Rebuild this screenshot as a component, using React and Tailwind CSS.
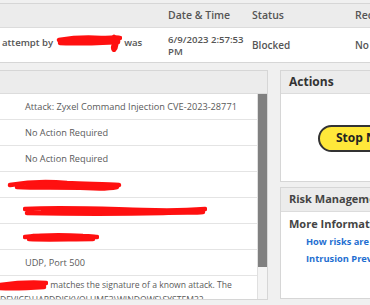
import React from 'react';

const font = { fontFamily: '"Open Sans", "Noto Sans", sans-serif' };

function Scribble({ w, h, paths, className = '' }) {
  return (
    <svg width={w} height={h} viewBox={`0 0 ${w} ${h}`} className={`inline-block align-middle ${className}`}>
      {paths.map((d, i) => (
        <path key={i} d={d} fill="none" stroke="#ff1010" strokeWidth="4.5" strokeLinecap="round" strokeLinejoin="round" />
      ))}
    </svg>
  );
}

const rows = [
  { text: 'Attack: Zyxel Command Injection CVE-2023-28771' },
  { text: 'No Action Required' },
  { text: 'No Action Required' },
  {
    scribble: (
      <Scribble
        w={116}
        h={18}
        className="-ml-[18px]"
        paths={['M3 9 C20 6 40 5 60 7 C80 8 100 8 112 9', 'M10 11 C30 12 55 11 80 12 C95 13 105 12 110 11', 'M20 8 C40 7 70 9 100 10']}
      />
    ),
  },
  {
    scribble: (
      <Scribble
        w={184}
        h={14}
        className="-ml-[2px]"
        paths={['M2 5 C40 3 80 5 120 6 C150 7 170 6 182 5', 'M4 9 C50 10 100 10 140 9 C160 8 172 9 180 8', 'M20 7 C70 6 120 8 170 7']}
      />
    ),
  },
  {
    scribble: (
      <Scribble
        w={76}
        h={12}
        className="-ml-[2px]"
        paths={['M2 6 C20 4 40 4 60 5 C68 5 72 6 74 6', 'M6 8 C25 9 45 8 70 8', 'M10 5 C30 6 50 6 68 7']}
      />
    ),
  },
  { text: 'UDP, Port 500' },
];

export default function App() {
  return (
    <div className="w-[370px] h-[305px] overflow-hidden bg-[#f0f0f0] text-[#555]" style={font}>
      {/* top result table */}
      <div className="mt-[3px] border-t border-[#d6d6d6]">
        <div className="flex h-[24px] items-center bg-[#ececec] border-b border-[#dcdcdc] text-[10.5px] font-semibold text-[#555] whitespace-nowrap">
          <div className="w-[168px] shrink-0" />
          <div className="w-[84px] shrink-0">Date &amp; Time</div>
          <div className="w-[103px] shrink-0">Status</div>
          <div className="shrink-0">Recommended</div>
        </div>
        <div className="flex h-[35px] bg-white border-b border-[#d6d6d6] text-[9.6px] font-semibold text-[#555] leading-[12px] whitespace-nowrap">
          <div className="w-[168px] shrink-0 pl-[2px] pt-[6px]">
            attempt by{' '}
            <Scribble
              w={66}
              h={20}
              className="-mt-[2px]"
              paths={['M3 8 C15 6 30 5 45 6 C55 6 62 5 64 6', 'M4 11 C20 12 40 11 62 10', 'M58 5 C62 9 60 16 58 18 C56 16 58 10 62 9', 'M10 9 C25 8 45 9 60 8']}
            />{' '}
            was
          </div>
          <div className="w-[84px] shrink-0 pt-[6px]">
            6/9/2023 2:57:53
            <br />
            PM
          </div>
          <div className="w-[103px] shrink-0 flex items-center text-[10px]">Blocked</div>
          <div className="shrink-0 flex items-center text-[10px]">No Action</div>
        </div>
      </div>

      {/* panels */}
      <div className="mt-[7px] flex gap-[12px]">
        {/* details panel */}
        <div className="w-[268px] h-[230px] shrink-0 flex flex-col bg-white border-t border-r border-b border-[#d6d6d6] overflow-hidden">
          <div className="h-[23px] shrink-0 bg-[#ececec] border-b border-[#dcdcdc]" />
          <div className="flex flex-1 min-h-0">
            <div className="flex-1 min-w-0 text-[9.2px] text-[#5a5a5a]">
              {rows.map((r, i) => (
                <div key={i} className="h-[26px] flex items-center pl-[25px] border-b border-[#e4e4e4] whitespace-nowrap">
                  {r.text ?? r.scribble}
                </div>
              ))}
              <div className="pt-[2px] leading-[14px] whitespace-nowrap text-[8.6px]">
                <Scribble w={48} h={14} paths={['M0 6 C15 4 30 3 46 4', 'M0 9 C15 10 30 9 44 8', 'M4 7 C20 6 34 6 44 6']} />{' '}
                matches the signature of a known attack. The
                <br />
                DEVICE\HARDDISKVOLUME3\WINDOWS\SYSTEM32
              </div>
            </div>
            <div className="w-[10px] shrink-0 flex flex-col bg-[#f4f4f4] border-l border-[#e0e0e0]">
              <div className="h-[173px] bg-[#808080]" />
            </div>
          </div>
        </div>

        {/* right column */}
        <div className="w-[200px] shrink-0 flex flex-col gap-[5px]">
          <div className="h-[112px] flex flex-col bg-white border border-[#d6d6d6]">
            <div className="h-[23px] shrink-0 flex items-center pl-[8px] bg-[#ececec] border-b border-[#dcdcdc] text-[12px] font-bold text-[#333]">
              Actions
            </div>
            <div className="flex-1 pl-[37px] pt-[30px]">
              <button className="h-[27px] px-[16px] rounded-full bg-[#ffe83a] border-2 border-[#333] text-[12px] font-bold text-[#222] whitespace-nowrap">
                Stop Now
              </button>
            </div>
          </div>
          <div className="h-[112px] flex flex-col bg-white border border-[#d6d6d6]">
            <div className="h-[24px] shrink-0 flex items-center pl-[8px] bg-[#ececec] border-b border-[#dcdcdc] text-[11px] font-bold text-[#444] whitespace-nowrap">
              Risk Management
            </div>
            <div className="pl-[8px] pt-[4px] text-[11px] font-bold text-[#444] whitespace-nowrap">More Information</div>
            <div className="pl-[25px] pt-[2px] flex flex-col gap-[4px] text-[9.3px] font-bold text-[#1f6fd1] whitespace-nowrap leading-[13px]">
              <span>How risks are determined</span>
              <span>Intrusion Prevention</span>
            </div>
          </div>
        </div>
      </div>
    </div>
  );
}
